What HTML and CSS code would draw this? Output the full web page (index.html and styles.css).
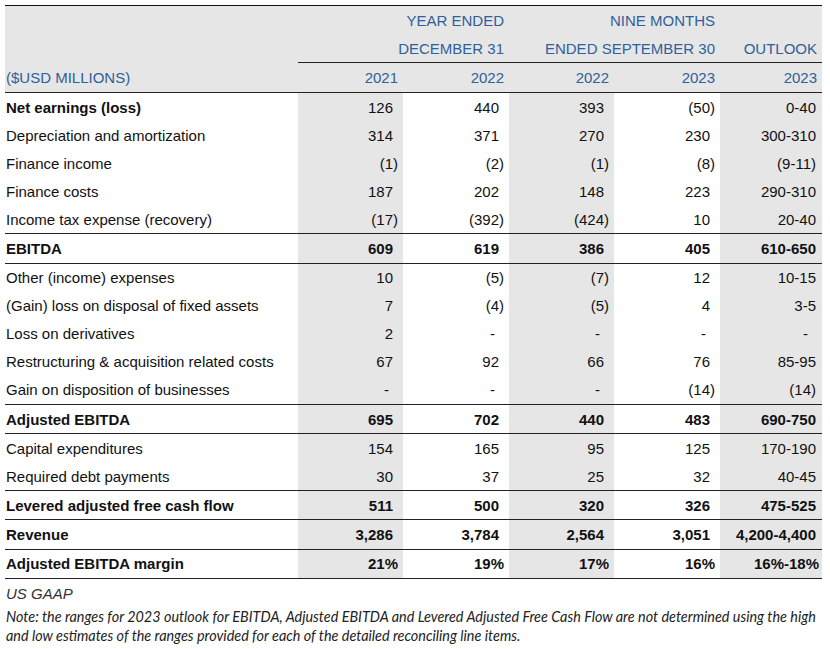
FILE: index.html
```html
<!DOCTYPE html>
<html lang="en">
<head>
<meta charset="utf-8">
<title>Adjusted EBITDA reconciliation</title>
<link rel="stylesheet" href="styles.css">
</head>
<body>
<div class="page">
  <table class="recon">
    <colgroup>
      <col class="c-label">
      <col class="c-num">
      <col class="c-num2">
      <col class="c-num">
      <col class="c-num2">
      <col class="c-out">
    </colgroup>
    <thead>
      <tr class="h1">
        <th class="lbl"></th>
        <th colspan="2" class="grp">YEAR ENDED</th>
        <th colspan="2" class="grp">NINE MONTHS</th>
        <th class="grp"></th>
      </tr>
      <tr class="h2">
        <th class="lbl"></th>
        <th colspan="2" class="grp rule">DECEMBER 31</th>
        <th colspan="2" class="grp rule">ENDED SEPTEMBER 30</th>
        <th class="grp rule">OUTLOOK</th>
      </tr>
      <tr class="h3">
        <th class="lbl">($USD MILLIONS)</th>
        <th class="yr">2021</th>
        <th class="yr">2022</th>
        <th class="yr">2022</th>
        <th class="yr">2023</th>
        <th class="yr">2023</th>
      </tr>
    </thead>
    <tbody>
      <tr class="lbold">
        <td class="lbl">Net earnings (loss)</td>
        <td class="sh"><span class="p">126</span></td><td><span class="p">440</span></td><td class="sh"><span class="p">393</span></td><td>(50)</td><td class="sh out">0-40</td>
      </tr>
      <tr>
        <td class="lbl">Depreciation and amortization</td>
        <td class="sh"><span class="p">314</span></td><td><span class="p">371</span></td><td class="sh"><span class="p">270</span></td><td><span class="p">230</span></td><td class="sh out">300-310</td>
      </tr>
      <tr>
        <td class="lbl">Finance income</td>
        <td class="sh">(1)</td><td>(2)</td><td class="sh">(1)</td><td>(8)</td><td class="sh out">(9-11)</td>
      </tr>
      <tr>
        <td class="lbl">Finance costs</td>
        <td class="sh"><span class="p">187</span></td><td><span class="p">202</span></td><td class="sh"><span class="p">148</span></td><td><span class="p">223</span></td><td class="sh out">290-310</td>
      </tr>
      <tr>
        <td class="lbl">Income tax expense (recovery)</td>
        <td class="sh">(17)</td><td>(392)</td><td class="sh">(424)</td><td><span class="p">10</span></td><td class="sh out">20-40</td>
      </tr>
      <tr class="bold ruled">
        <td class="lbl">EBITDA</td>
        <td class="sh"><span class="p">609</span></td><td><span class="p">619</span></td><td class="sh"><span class="p">386</span></td><td><span class="p">405</span></td><td class="sh out">610-650</td>
      </tr>
      <tr class="ruled">
        <td class="lbl">Other (income) expenses</td>
        <td class="sh"><span class="p">10</span></td><td>(5)</td><td class="sh">(7)</td><td><span class="p">12</span></td><td class="sh out">10-15</td>
      </tr>
      <tr>
        <td class="lbl">(Gain) loss on disposal of fixed assets</td>
        <td class="sh"><span class="p">7</span></td><td>(4)</td><td class="sh">(5)</td><td><span class="p">4</span></td><td class="sh out">3-5</td>
      </tr>
      <tr>
        <td class="lbl">Loss on derivatives</td>
        <td class="sh"><span class="p">2</span></td><td><span class="d">-</span></td><td class="sh"><span class="d">-</span></td><td><span class="d">-</span></td><td class="sh out"><span class="d">-</span></td>
      </tr>
      <tr>
        <td class="lbl">Restructuring &amp; acquisition related costs</td>
        <td class="sh"><span class="p">67</span></td><td><span class="p">92</span></td><td class="sh"><span class="p">66</span></td><td><span class="p">76</span></td><td class="sh out">85-95</td>
      </tr>
      <tr>
        <td class="lbl">Gain on disposition of businesses</td>
        <td class="sh"><span class="d">-</span></td><td><span class="d">-</span></td><td class="sh"><span class="d">-</span></td><td>(14)</td><td class="sh out">(14)</td>
      </tr>
      <tr class="bold ruled">
        <td class="lbl">Adjusted EBITDA</td>
        <td class="sh"><span class="p">695</span></td><td><span class="p">702</span></td><td class="sh"><span class="p">440</span></td><td><span class="p">483</span></td><td class="sh out">690-750</td>
      </tr>
      <tr class="ruled">
        <td class="lbl">Capital expenditures</td>
        <td class="sh"><span class="p">154</span></td><td><span class="p">165</span></td><td class="sh"><span class="p">95</span></td><td><span class="p">125</span></td><td class="sh out">170-190</td>
      </tr>
      <tr>
        <td class="lbl">Required debt payments</td>
        <td class="sh"><span class="p">30</span></td><td><span class="p">37</span></td><td class="sh"><span class="p">25</span></td><td><span class="p">32</span></td><td class="sh out">40-45</td>
      </tr>
      <tr class="bold ruled">
        <td class="lbl">Levered adjusted free cash flow</td>
        <td class="sh"><span class="p">511</span></td><td><span class="p">500</span></td><td class="sh"><span class="p">320</span></td><td><span class="p">326</span></td><td class="sh out">475-525</td>
      </tr>
      <tr class="bold ruled">
        <td class="lbl">Revenue</td>
        <td class="sh"><span class="p">3,286</span></td><td><span class="p">3,784</span></td><td class="sh"><span class="p">2,564</span></td><td><span class="p">3,051</span></td><td class="sh out">4,200-4,400</td>
      </tr>
      <tr class="bold ruled last">
        <td class="lbl">Adjusted EBITDA margin</td>
        <td class="sh">21%</td><td>19%</td><td class="sh">17%</td><td>16%</td><td class="sh out pct">16%-18%</td>
      </tr>
    </tbody>
  </table>
  <p class="basis">US GAAP</p>
  <p class="note">Note: the ranges for 2023 outlook for EBITDA, Adjusted EBITDA and Levered Adjusted Free Cash Flow are not determined using the high<br>and low estimates of the ranges provided for each of the detailed reconciling line items.</p>
</div>
</body>
</html>
```

FILE: styles.css
```css
html, body {
  margin: 0;
  padding: 0;
  background: #ffffff;
}

.page {
  padding: 5px 8px 0 5px;
  font-family: "Liberation Sans", Arial, sans-serif;
  color: #111111;
}

.recon {
  width: 817px;
  border-collapse: collapse;
  table-layout: fixed;
  font-size: 15px;
  line-height: 17px;
  border-top: 1.5px solid #111;
}

.c-label { width: 293px; }
.c-num { width: 105px; }
.c-num2 { width: 106px; }
.c-out { width: 102px; }

.recon th,
.recon td {
  padding: 0 5px 0 0;
  text-align: right;
  vertical-align: middle;
  white-space: nowrap;
}

.recon .lbl {
  text-align: left;
  padding-left: 1px;
}

/* Header */
.recon thead th {
  background: #e6e6e6;
  color: #30609b;
  font-weight: normal;
}

.recon .h1 th { height: 28px; }
.recon .h2 th { height: 28px; }
.recon .h2 .rule { border-bottom: 1px solid #222; }
.recon .h3 th {
  height: 29px;
  border-bottom: 1px solid #222;
}

/* Body */
.recon tbody td {
  height: 28.1px;
}

.recon tbody td.sh {
  background: #e6e6e6;
}

.recon tr.bold td,
.recon tr.lbold td.lbl { font-weight: bold; }

.recon tr.ruled td { border-top: 1px solid #222; }
.recon tr.last td { border-bottom: 1px solid #222; }

.recon .p { padding-right: 5px; }
.recon .d { padding-right: 9px; }

.recon td.out { padding-right: 6px; }
.recon td.out .d { padding-right: 8px; }
.recon td.pct { padding-right: 3px; }

/* Footnotes */
.basis {
  margin: 6px 0 0 1px;
  font-style: italic;
  font-size: 15px;
  line-height: 18px;
  color: #333333;
}

.note {
  margin: 4px 0 0 1px;
  font-family: Lato, "Open Sans", sans-serif;
  font-style: italic;
  font-size: 14.4px;
  line-height: 19px;
  color: #222222;
  white-space: nowrap;
}
```
